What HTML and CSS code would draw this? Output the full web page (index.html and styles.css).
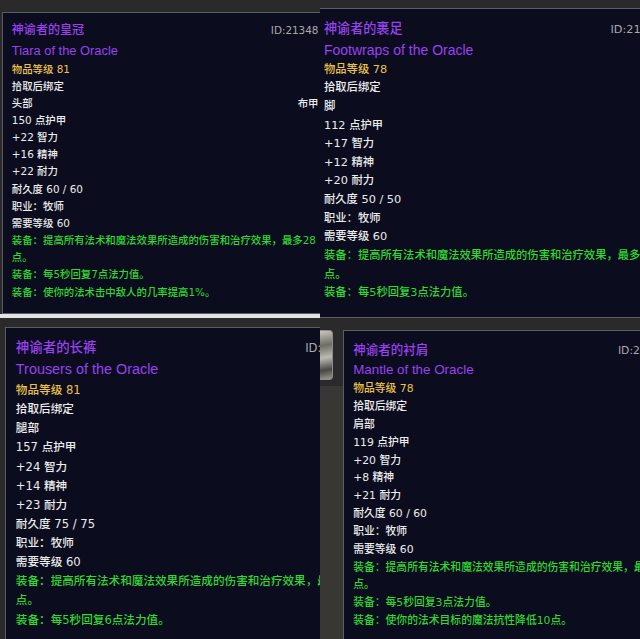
FILE: index.html
```html
<!DOCTYPE html>
<html lang="zh-CN">
<head>
    <meta charset="UTF-8">
    <meta name="viewport" content="width=device-width, initial-scale=1.0">
    <title>神谕者套装</title>
    <link rel="stylesheet" href="styles.css">
</head>
<body>
<div class="collage">

    <!-- 左上：皇冠 -->
    <div class="cell cell--head">
        <div class="tip tip--head">
            <div class="tip-row">
                <span class="tip-name">神谕者的皇冠</span>
                <span class="tip-id">ID:21348</span>
            </div>
            <div class="tip-en">Tiara of the Oracle</div>
            <div class="tip-level">物品等级 81</div>
            <div>拾取后绑定</div>
            <div class="tip-row"><span>头部</span><span>布甲</span></div>
            <div>150 点护甲</div>
            <div>+22 智力</div>
            <div>+16 精神</div>
            <div>+22 耐力</div>
            <div>耐久度 60 / 60</div>
            <div>职业：牧师</div>
            <div>需要等级 60</div>
            <div class="tip-use">装备：提高所有法术和魔法效果所造成的伤害和治疗效果，最多28</div>
            <div class="tip-use">点。</div>
            <div class="tip-use">装备：每5秒回复7点法力值。</div>
            <div class="tip-use">装备：使你的法术击中敌人的几率提高1%。</div>
        </div>
        <div class="strip"></div>
    </div>

    <!-- 右上：裹足 -->
    <div class="cell cell--feet">
        <div class="tip tip--feet">
            <div class="tip-row">
                <span class="tip-name">神谕者的裹足</span>
                <span class="tip-id">ID:21349</span>
            </div>
            <div class="tip-en">Footwraps of the Oracle</div>
            <div class="tip-level">物品等级 78</div>
            <div>拾取后绑定</div>
            <div>脚</div>
            <div>112 点护甲</div>
            <div>+17 智力</div>
            <div>+12 精神</div>
            <div>+20 耐力</div>
            <div>耐久度 50 / 50</div>
            <div>职业：牧师</div>
            <div>需要等级 60</div>
            <div class="tip-use">装备：提高所有法术和魔法效果所造成的伤害和治疗效果，最多22</div>
            <div class="tip-use">点。</div>
            <div class="tip-use">装备：每5秒回复3点法力值。</div>
        </div>
    </div>

    <!-- 左下：长裤 -->
    <div class="cell cell--legs">
        <div class="tip tip--legs">
            <div class="tip-row">
                <span class="tip-name">神谕者的长裤</span>
                <span class="tip-id">ID:21351</span>
            </div>
            <div class="tip-en">Trousers of the Oracle</div>
            <div class="tip-level">物品等级 81</div>
            <div>拾取后绑定</div>
            <div>腿部</div>
            <div>157 点护甲</div>
            <div>+24 智力</div>
            <div>+14 精神</div>
            <div>+23 耐力</div>
            <div>耐久度 75 / 75</div>
            <div>职业：牧师</div>
            <div>需要等级 60</div>
            <div class="tip-use">装备：提高所有法术和魔法效果所造成的伤害和治疗效果，最多33</div>
            <div class="tip-use">点。</div>
            <div class="tip-use">装备：每5秒回复6点法力值。</div>
        </div>
    </div>

    <!-- 右下：衬肩 -->
    <div class="cell cell--shoulder">
        <div class="side">
            <div class="thumb"></div>
            <div class="side-fill"></div>
        </div>
        <div class="tip tip--shoulder">
            <div class="tip-row">
                <span class="tip-name">神谕者的衬肩</span>
                <span class="tip-id">ID:21350</span>
            </div>
            <div class="tip-en">Mantle of the Oracle</div>
            <div class="tip-level">物品等级 78</div>
            <div>拾取后绑定</div>
            <div>肩部</div>
            <div>119 点护甲</div>
            <div>+20 智力</div>
            <div>+8 精神</div>
            <div>+21 耐力</div>
            <div>耐久度 60 / 60</div>
            <div>职业：牧师</div>
            <div>需要等级 60</div>
            <div class="tip-use">装备：提高所有法术和魔法效果所造成的伤害和治疗效果，最多21</div>
            <div class="tip-use">点。</div>
            <div class="tip-use">装备：每5秒回复3点法力值。</div>
            <div class="tip-use">装备：使你的法术目标的魔法抗性降低10点。</div>
        </div>
    </div>

</div>
</body>
</html>
```

FILE: styles.css
```css
/* 拼图：四张物品提示截图 */
body {
    margin: 0;
    background-color: #2a2a2a;
    font-family: "DejaVu Sans", "Noto Sans CJK SC", sans-serif;
}

.collage {
    display: grid;
    grid-template-columns: 320px 320px;
    grid-template-rows: 320px 319px;
    width: 640px;
    height: 639px;
    overflow: hidden;
}

.cell {
    overflow: hidden;
    background-color: #2a2a2a;
}

/* 提示框 */
.tip {
    box-sizing: border-box;
    background-color: #0b0c1e;
    border: 1px solid #5c5c62;
    border-right: none;
    padding: 0.8em 0.15em 0 0.85em;
    color: #ececec;
    font-weight: 500;
    line-height: 1.65;
    white-space: nowrap;
    overflow: hidden;
}

.tip-row {
    display: flex;
    justify-content: space-between;
    align-items: baseline;
}

.tip-name {
    font-size: 1.16em;
    color: #9a42f0;
}

.tip-id {
    font-size: 1em;
    color: #a9a9ae;
}

.tip-en {
    font-family: "Liberation Sans", "Noto Sans CJK SC", sans-serif;
    font-size: 1.24em;
    line-height: 1.5;
    color: #9a42f0;
}

.tip-level {
    color: #ecc34a;
}

.tip-use {
    color: #30d830;
}

/* 左上 */
.cell--head {
    padding: 12px 0 0 2px;
}

.tip--head {
    font-size: 10.4px;
    width: 318px;
    height: 302px;
}

.strip {
    height: 4px;
    margin-left: -2px;
    background-color: #e4e4e4;
}

/* 右上 */
.cell--feet {
    padding-top: 8px;
}

.tip--feet {
    font-size: 11.3px;
    width: 344px;
    height: 310px;
    border-left: none;
    padding-left: 4px;
}

/* 左下 */
.cell--legs {
    padding: 7px 0 0 5px;
}

.tip--legs {
    font-size: 11.6px;
    width: 355px;
    height: 330px;
}

/* 右下 */
.cell--shoulder {
    display: flex;
    align-items: flex-start;
}

.side {
    display: flex;
    flex-direction: column;
    width: 23px;
    height: 100%;
    flex-shrink: 0;
    padding-top: 10px;
    box-sizing: border-box;
}

.thumb {
    width: 12px;
    height: 48px;
    border: 1px solid #8c8c8c;
    border-left: none;
    border-radius: 0 4px 4px 0;
    background: linear-gradient(170deg, #c9c6bd 0%, #6f6c66 30%, #bdbab2 55%, #4a4844 80%, #9a978f 100%);
}

.side-fill {
    flex: 1;
    margin-top: 6px;
    background-color: #393733;
}

.tip--shoulder {
    font-size: 10.8px;
    width: 326px;
    height: 320px;
    margin-top: 10px;
    flex-shrink: 0;
}
```
